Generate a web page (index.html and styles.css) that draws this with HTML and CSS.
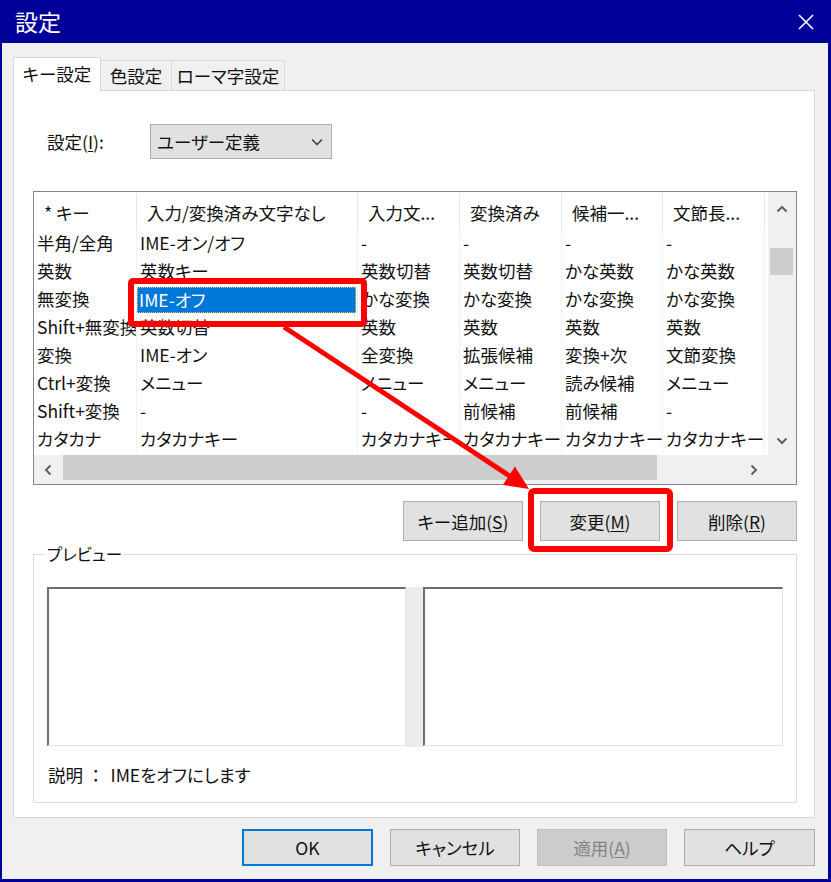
FILE: index.html
```html
<!DOCTYPE html>
<html lang="ja">
<head>
<meta charset="utf-8">
<title>設定</title>
<link rel="stylesheet" href="styles.css">
</head>
<body>
<div class="window">
  <div class="titlebar">
    <span class="title">設定</span>
    <svg class="close" width="16" height="16" viewBox="0 0 16 16"><path d="M1 1 L15 15 M15 1 L1 15" stroke="#fff" stroke-width="1.6" fill="none"/></svg>
  </div>
  <div class="client">
    <div class="tabs">
      <div class="tab active">キー設定</div>
      <div class="tab t2">色設定</div>
      <div class="tab t3">ローマ字設定</div>
    </div>
    <div class="panel">
      <div class="setting-row">
        <span class="setting-label">設定(<u>I</u>):</span>
        <div class="combo">
          <span>ユーザー定義</span>
          <svg width="12" height="8" viewBox="0 0 12 8"><path d="M1 1.5 L6 6.5 L11 1.5" stroke="#333" stroke-width="1.3" fill="none"/></svg>
        </div>
      </div>
      <div class="listview">
        <div class="lv-main">
          <div class="lv-grid">
            <div class="hcell">* キー</div>
            <div class="hcell">入力/変換済み文字なし</div>
            <div class="hcell">入力文...</div>
            <div class="hcell">変換済み</div>
            <div class="hcell">候補一...</div>
            <div class="hcell">文節長...</div>
            <div class="hcell last"></div>

            <div class="cell">半角/全角</div><div class="cell">IME-オン/オフ</div><div class="cell">-</div><div class="cell">-</div><div class="cell">-</div><div class="cell">-</div><div class="cell last"></div>
            <div class="cell">英数</div><div class="cell">英数キー</div><div class="cell">英数切替</div><div class="cell">英数切替</div><div class="cell">かな英数</div><div class="cell">かな英数</div><div class="cell last"></div>
            <div class="cell">無変換</div><div class="cell selcell"><div class="sel">IME-オフ</div></div><div class="cell">かな変換</div><div class="cell">かな変換</div><div class="cell">かな変換</div><div class="cell">かな変換</div><div class="cell last"></div>
            <div class="cell">Shift+無変換</div><div class="cell">英数切替</div><div class="cell">英数</div><div class="cell">英数</div><div class="cell">英数</div><div class="cell">英数</div><div class="cell last"></div>
            <div class="cell">変換</div><div class="cell">IME-オン</div><div class="cell">全変換</div><div class="cell">拡張候補</div><div class="cell">変換+次</div><div class="cell">文節変換</div><div class="cell last"></div>
            <div class="cell">Ctrl+変換</div><div class="cell">メニュー</div><div class="cell">メニュー</div><div class="cell">メニュー</div><div class="cell">読み候補</div><div class="cell">メニュー</div><div class="cell last"></div>
            <div class="cell">Shift+変換</div><div class="cell">-</div><div class="cell">-</div><div class="cell">前候補</div><div class="cell">前候補</div><div class="cell">-</div><div class="cell last"></div>
            <div class="cell">カタカナ</div><div class="cell">カタカナキー</div><div class="cell">カタカナキー</div><div class="cell">カタカナキー</div><div class="cell">カタカナキー</div><div class="cell">カタカナキー</div><div class="cell last"></div>
          </div>
          <div class="vscroll">
            <div class="sb-btn up"><svg width="12" height="8" viewBox="0 0 12 8"><path d="M1.5 6.5 L6 2 L10.5 6.5" stroke="#606060" stroke-width="2" fill="none"/></svg></div>
            <div class="vtrack"><div class="vthumb"></div></div>
            <div class="sb-btn down"><svg width="12" height="8" viewBox="0 0 12 8"><path d="M1.5 1.5 L6 6 L10.5 1.5" stroke="#606060" stroke-width="2" fill="none"/></svg></div>
          </div>
        </div>
        <div class="hscroll-row">
          <div class="hscroll">
            <div class="sb-btn left"><svg width="8" height="12" viewBox="0 0 8 12"><path d="M6.5 1.5 L2 6 L6.5 10.5" stroke="#606060" stroke-width="2" fill="none"/></svg></div>
            <div class="htrack"><div class="hthumb"></div></div>
            <div class="sb-btn right"><svg width="8" height="12" viewBox="0 0 8 12"><path d="M1.5 1.5 L6 6 L1.5 10.5" stroke="#606060" stroke-width="2" fill="none"/></svg></div>
          </div>
          <div class="corner"></div>
        </div>
      </div>
      <div class="btn-row">
        <div class="btn">キー追加(<u>S</u>)</div>
        <div class="btn">変更(<u>M</u>)</div>
        <div class="btn">削除(<u>R</u>)</div>
      </div>
      <div class="group">
        <span class="legend">プレビュー</span>
        <div class="pv-row">
          <div class="pv-box"></div>
          <div class="splitter"></div>
          <div class="pv-box wide"></div>
        </div>
        <div class="desc"><span>説明</span><span class="colon">：</span><span>IMEをオフにします</span></div>
      </div>
    </div>
    <div class="footer">
      <div class="btn fbtn ok">OK</div>
      <div class="btn fbtn">キャンセル</div>
      <div class="btn fbtn disabled">適用(<u>A</u>)</div>
      <div class="btn fbtn w131">ヘルプ</div>
    </div>
  </div>
  <svg class="annot" width="831" height="882" viewBox="0 0 831 882">
    <rect x="131" y="281" width="233" height="43" rx="2" fill="none" stroke="#ff0000" stroke-width="6"/>
    <rect x="531" y="491" width="139" height="58" rx="3" fill="none" stroke="#ff0000" stroke-width="6"/>
    <line x1="284" y1="327" x2="511" y2="477" stroke="#ff0000" stroke-width="5"/>
    <polygon points="529,489 502.9,485 514.9,466.6" fill="#ff0000"/>
  </svg>
</div>
</body>
</html>
```

FILE: styles.css
```css
* { box-sizing: border-box; }
html, body { margin: 0; padding: 0; }
body {
  width: 831px;
  height: 882px;
  overflow: hidden;
  font-family: "Noto Sans CJK JP", "Noto Sans", sans-serif;
  font-size: 17.5px;
  font-feature-settings: "palt";
  color: #111;
  background: #f0f0f0;
}
u { text-decoration: underline; text-underline-offset: 2px; }

.window {
  position: relative;
  width: 831px;
  height: 882px;
  border-left: 2px solid #000099;
  border-right: 3px solid #000099;
  border-bottom: 3px solid #000099;
  background: #f0f0f0;
  display: flex;
  flex-direction: column;
}
.titlebar {
  height: 43px;
  flex: none;
  background: #000099;
  color: #fff;
  display: flex;
  align-items: center;
  justify-content: space-between;
  padding: 0 14px 0 13px;
}
.title { font-size: 23px; line-height: 1; }

.client {
  flex: 1;
  padding: 14px 13px 0 11px;
}

.tabs {
  display: flex;
  align-items: flex-end;
  height: 33px;
  position: relative;
  z-index: 1;
}
.tab {
  height: 30px;
  border: 1px solid #d9d9d9;
  border-bottom: none;
  border-left: none;
  background: #f0f0f0;
  display: flex;
  align-items: center;
  justify-content: center;
  white-space: nowrap;
}
.tab.active {
  width: 88px;
  height: 34px;
  margin-bottom: -1px;
  background: #fff;
  border-left: 1px solid #d9d9d9;
  padding-bottom: 2px;
}
.tab.t2 { width: 71px; }
.tab.t3 { width: 113px; }

.panel {
  height: 728px;
  background: #fff;
  border: 1px solid #d9d9d9;
  padding: 33px 17px 0 19px;
  display: flex;
  flex-direction: column;
}

.setting-row {
  display: flex;
  align-items: center;
  height: 35px;
  padding-left: 14px;
}
.setting-label { width: 103px; }
.combo {
  width: 182px;
  height: 35px;
  background: #e1e1e1;
  border: 1px solid #adadad;
  display: flex;
  align-items: center;
  justify-content: space-between;
  padding: 0 8px 0 6px;
}

.listview {
  margin-top: 32px;
  width: 764px;
  height: 294px;
  border: 1px solid #828790;
  display: flex;
  flex-direction: column;
  flex: none;
}
.lv-main {
  height: 263px;
  display: flex;
}
.lv-grid {
  width: 734px;
  height: 263px;
  overflow: hidden;
  display: grid;
  grid-template-columns: 103px 221px 102px 102px 101px 102px 3px;
  grid-auto-rows: 28px;
  grid-template-rows: 37px;
  align-content: start;
}
.hcell {
  height: 37px;
  display: flex;
  align-items: center;
  padding-left: 10px;
  white-space: nowrap;
  overflow: hidden;
  border-right: 1px solid #e5e5e5;
  border-top: 3px solid #fff;
}
.hcell.last { border-right: none; }
.cell {
  height: 28px;
  line-height: 28px;
  padding-left: 3px;
  white-space: nowrap;
  overflow: hidden;
  border-right: 1px solid #f2f2f2;
}
.cell.last { border-right: none; }
.cell.selcell { padding: 2px 1px 0 0; }
.sel {
  height: 26px;
  line-height: 25px;
  background: #0078d7;
  color: #fff;
  padding-left: 2px;
  outline: 1px dotted #f0c070;
  outline-offset: -1px;
}

.vscroll {
  width: 28px;
  height: 263px;
  background: #f0f0f0;
  display: flex;
  flex-direction: column;
}
.sb-btn {
  display: flex;
  align-items: center;
  justify-content: center;
  flex: none;
}
.sb-btn.up { height: 33px; }
.sb-btn.down { height: 28px; }
.vtrack { flex: 1; }
.vthumb {
  margin: 23px 3px 0 2px;
  height: 27px;
  background: #cdcdcd;
}

.hscroll-row {
  height: 29px;
  display: flex;
}
.hscroll {
  width: 734px;
  background: #f0f0f0;
  display: flex;
}
.sb-btn.left { width: 28px; }
.sb-btn.right { width: 28px; }
.htrack { flex: 1; padding: 0 0 3px 1px; }
.hthumb {
  width: 594px;
  height: 25px;
  background: #cdcdcd;
}
.corner { width: 28px; background: #f0f0f0; }

.btn-row {
  margin-top: 16px;
  height: 40px;
  display: flex;
  justify-content: flex-end;
  gap: 17px;
  width: 764px;
}
.btn {
  width: 120px;
  background: #e1e1e1;
  border: 1px solid #adadad;
  display: flex;
  align-items: center;
  justify-content: center;
  white-space: nowrap;
}

.group {
  position: relative;
  margin-top: 13px;
  width: 764px;
  height: 249px;
  border: 1px solid #dcdcdc;
  padding: 32px 13px 0 13px;
}
.legend {
  position: absolute;
  top: -12px;
  left: 11px;
  background: #fff;
  padding: 0 2px;
  font-size: 16.5px;
  line-height: 22px;
}
.pv-row {
  display: flex;
  height: 160px;
}
.pv-box {
  width: 359px;
  height: 159px;
  background: #fff;
  border-top: 2px solid #6d6d6d;
  border-left: 2px solid #6d6d6d;
  border-right: 1px solid #e3e3e3;
  border-bottom: 1px solid #e3e3e3;
}
.pv-box.wide { width: 360px; }
.splitter {
  width: 17px;
  height: 160px;
  background: #ececec;
}
.desc {
  margin-top: 16px;
  line-height: 24px;
  padding-left: 1px;
  display: flex;
}
.desc .colon {
  font-feature-settings: normal;
  margin: 0 6px 0 4px;
}

.footer {
  margin-top: 11px;
  height: 37px;
  display: flex;
  justify-content: flex-end;
  gap: 17px;
}
.fbtn { width: 130px; }
.fbtn.w131 { width: 131px; }
.fbtn.ok { width: 131px; border: 2px solid #0078d7; }
.fbtn.disabled {
  background: #cccccc;
  border-color: #bfbfbf;
  color: #838383;
}

.annot {
  position: absolute;
  left: -2px;
  top: 0;
  pointer-events: none;
}
```
